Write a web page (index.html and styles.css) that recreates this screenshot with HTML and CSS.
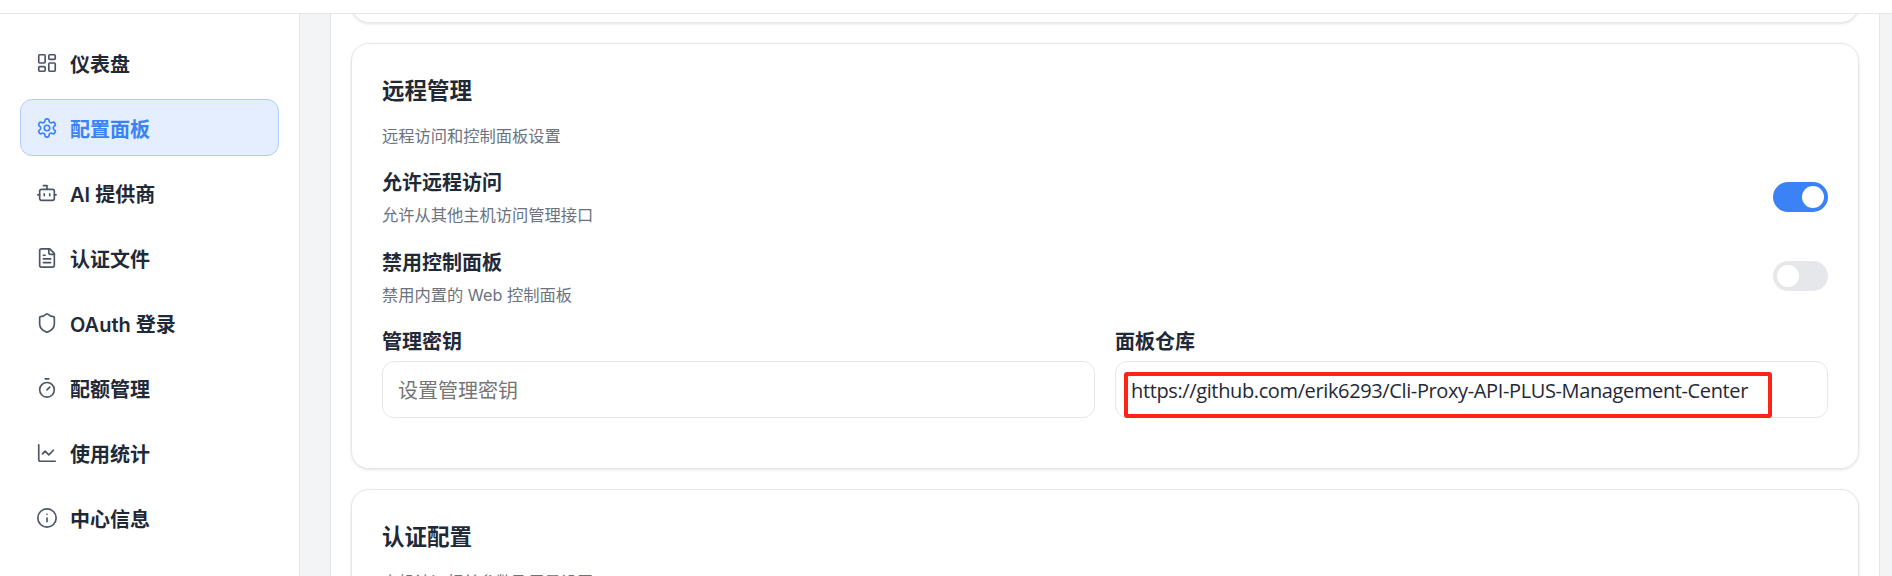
FILE: index.html
```html
<!DOCTYPE html>
<html lang="zh-CN">
<head>
<meta charset="utf-8">
<title>配置面板</title>
<link rel="stylesheet" href="styles.css">
</head>
<body>
<header class="topbar"></header>
<div class="shell">
  <aside class="sidebar">
    <nav class="nav">
      <a class="nav-item"><svg class="icon" viewBox="0 0 24 24"><rect x="3" y="3" width="7" height="9" rx="1"/><rect x="14" y="3" width="7" height="5" rx="1"/><rect x="14" y="12" width="7" height="9" rx="1"/><rect x="3" y="16" width="7" height="5" rx="1"/></svg><span>仪表盘</span></a>
      <a class="nav-item active"><svg class="icon" viewBox="0 0 24 24"><path d="M12.22 2h-.44a2 2 0 0 0-2 2v.18a2 2 0 0 1-1 1.73l-.43.25a2 2 0 0 1-2 0l-.15-.08a2 2 0 0 0-2.73.73l-.22.38a2 2 0 0 0 .73 2.73l.15.1a2 2 0 0 1 1 1.72v.51a2 2 0 0 1-1 1.74l-.15.09a2 2 0 0 0-.73 2.73l.22.38a2 2 0 0 0 2.73.73l.15-.08a2 2 0 0 1 2 0l.43.25a2 2 0 0 1 1 1.73V20a2 2 0 0 0 2 2h.44a2 2 0 0 0 2-2v-.18a2 2 0 0 1 1-1.73l.43-.25a2 2 0 0 1 2 0l.15.08a2 2 0 0 0 2.73-.73l.22-.39a2 2 0 0 0-.73-2.73l-.15-.08a2 2 0 0 1-1-1.74v-.5a2 2 0 0 1 1-1.74l.15-.09a2 2 0 0 0 .73-2.73l-.22-.38a2 2 0 0 0-2.73-.73l-.15.08a2 2 0 0 1-2 0l-.43-.25a2 2 0 0 1-1-1.73V4a2 2 0 0 0-2-2z"/><circle cx="12" cy="12" r="3"/></svg><span>配置面板</span></a>
      <a class="nav-item"><svg class="icon" viewBox="0 0 24 24"><path d="M12 8V4H8"/><rect x="4" y="8" width="16" height="12" rx="2"/><path d="M2 14h2M20 14h2M15 13v2M9 13v2"/></svg><span>AI 提供商</span></a>
      <a class="nav-item"><svg class="icon" viewBox="0 0 24 24"><path d="M15 2H6a2 2 0 0 0-2 2v16a2 2 0 0 0 2 2h12a2 2 0 0 0 2-2V7Z"/><path d="M14 2v4a2 2 0 0 0 2 2h4"/><path d="M10 9H8M16 13H8M16 17H8"/></svg><span>认证文件</span></a>
      <a class="nav-item"><svg class="icon" viewBox="0 0 24 24"><path d="M20 13c0 5-3.5 7.5-7.66 8.95a1 1 0 0 1-.67-.01C7.5 20.5 4 18 4 13V6a1 1 0 0 1 1-1c2 0 4.5-1.2 6.24-2.72a1.17 1.17 0 0 1 1.52 0C14.51 3.81 17 5 19 5a1 1 0 0 1 1 1z"/></svg><span>OAuth 登录</span></a>
      <a class="nav-item"><svg class="icon" viewBox="0 0 24 24"><path d="M10 2h4M12 14l3-3"/><circle cx="12" cy="14" r="8"/></svg><span>配额管理</span></a>
      <a class="nav-item"><svg class="icon" viewBox="0 0 24 24"><path d="M3 3v16a2 2 0 0 0 2 2h16"/><path d="m19 9-5 5-4-4-3 3"/></svg><span>使用统计</span></a>
      <a class="nav-item"><svg class="icon" viewBox="0 0 24 24"><circle cx="12" cy="12" r="10"/><path d="M12 16v-4M12 8h.01"/></svg><span>中心信息</span></a>
    </nav>
  </aside>
  <div class="gutter"></div>
  <main class="main">
    <div class="cards">
      <section class="card card-prev"></section>
      <section class="card card-remote">
        <h2 class="card-title">远程管理</h2>
        <p class="card-desc">远程访问和控制面板设置</p>
        <div class="setting">
          <div class="setting-text">
            <div class="setting-name">允许远程访问</div>
            <div class="setting-hint">允许从其他主机访问管理接口</div>
          </div>
          <span class="switch on"><span class="knob"></span></span>
        </div>
        <div class="setting setting-next">
          <div class="setting-text">
            <div class="setting-name">禁用控制面板</div>
            <div class="setting-hint">禁用内置的 Web 控制面板</div>
          </div>
          <span class="switch"><span class="knob"></span></span>
        </div>
        <div class="fields">
          <div class="field">
            <label class="field-label">管理密钥</label>
            <div class="input placeholder">设置管理密钥</div>
          </div>
          <div class="field">
            <label class="field-label">面板仓库</label>
            <div class="input url">https://github.com/erik6293/Cli-Proxy-API-PLUS-Management-Center<span class="mark"></span></div>
          </div>
        </div>
      </section>
      <section class="card card-auth">
        <h2 class="card-title">认证配置</h2>
        <p class="card-desc">本机认证相关参数及用量设置</p>
      </section>
    </div>
  </main>
  <div class="rail"></div>
</div>
</body>
</html>
```
FILE: styles.css
```css
* { box-sizing: border-box; }
html, body { height: 100%; }
body {
  margin: 0;
  overflow: hidden;
  background: #fff;
  color: #1f2937;
  font-family: Inter, "Noto Sans CJK SC", sans-serif;
}
.topbar {
  height: 14px;
  background: #fff;
  border-bottom: 1px solid #e5e7eb;
  position: relative;
  z-index: 2;
}
.shell { display: flex; height: 562px; }
.sidebar {
  width: 300px;
  flex: none;
  background: #fff;
  border-right: 1px solid #e5e7eb;
  padding: 20px 20px 0;
}
.nav { display: flex; flex-direction: column; gap: 8px; }
.nav-item {
  display: flex;
  align-items: center;
  gap: 12px;
  height: 57px;
  padding: 0 15px;
  border: 1px solid transparent;
  border-radius: 12px;
  font-size: 20px;
  font-weight: 600;
  color: #1f2937;
}
.nav-item span { padding-top: 2px; }
.nav-item .icon { color: #4b5563; }
.nav-item.active {
  background: #e4eefe;
  border-color: #b1cdfb;
  color: #3b82f6;
}
.nav-item.active .icon { color: #3b82f6; }
.icon {
  width: 22px;
  height: 22px;
  flex: none;
  fill: none;
  stroke: currentColor;
  stroke-width: 1.8;
  stroke-linecap: round;
  stroke-linejoin: round;
}
.gutter { width: 31px; flex: none; background: #f3f4f6; border-right: 1px solid #e5e7eb; }
.main { flex: 1; min-width: 0; background: #fff; padding: 0 20px; overflow: hidden; }
.rail { width: 13px; flex: none; background: #f3f4f6; border-left: 1px solid #e5e7eb; }
.cards { display: flex; flex-direction: column; gap: 20px; margin-top: -40px; }
.card {
  background: #fff;
  border: 1px solid #e5e7eb;
  border-radius: 18px;
  box-shadow: 0 1px 3px rgba(0,0,0,.1);
  padding: 32px 30px;
}
.card-prev { height: 49px; padding: 0; }
.card-remote { height: 426px; }
.card-auth { height: 200px; }
.card-title { margin: 0; font-size: 22.5px; line-height: 30px; font-weight: 700; color: #1f2937; }
.card-desc { margin: 18px 0 0; font-size: 16.25px; line-height: 24px; color: #6b7280; }
.setting { display: flex; justify-content: space-between; align-items: center; margin-top: 21px; }
.setting-next { margin-top: 22px; }
.setting-text { min-width: 0; }
.setting-name { font-size: 20px; line-height: 28px; font-weight: 600; }
.setting-hint { font-size: 16.25px; line-height: 24px; margin-top: 6px; color: #6b7280; }
.switch {
  display: block;
  width: 55px;
  height: 30px;
  margin-bottom: 2px;
  padding: 4px;
  border-radius: 15px;
  background: #e5e7eb;
}
.setting-next .switch { margin-bottom: 4px; }
.switch.on { background: #3b82f6; display: flex; justify-content: flex-end; }
.knob { display: block; width: 22px; height: 22px; border-radius: 50%; background: #fff; }
.fields { display: grid; grid-template-columns: 1fr 1fr; gap: 20px; margin-top: 22px; }
.field-label { display: block; font-size: 20px; line-height: 27px; font-weight: 600; margin-bottom: 5px; }
.input {
  position: relative;
  height: 57px;
  padding: 0 15px;
  display: flex;
  align-items: center;
  background: #fff;
  border: 1px solid #e5e7eb;
  border-radius: 12px;
  font-size: 20px;
  white-space: nowrap;
}
.placeholder { color: #757575; }
.url { padding-top: 1px; font-family: "Open Sans", "Noto Sans", sans-serif; letter-spacing: -.375px; }
.mark {
  position: absolute;
  left: 8px;
  top: 10px;
  width: 648px;
  height: 46px;
  border: 4px solid #ff2318;
  border-radius: 3px;
}
```
